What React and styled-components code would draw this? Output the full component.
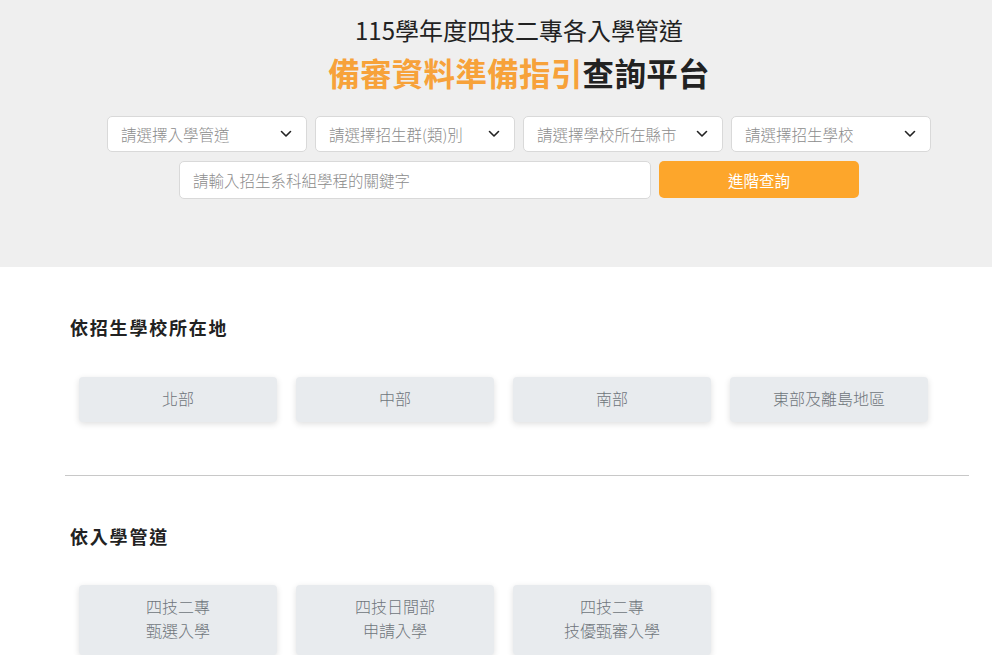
import React from "react";
import styled, { createGlobalStyle } from "styled-components";

const Global = createGlobalStyle`
  html, body { margin: 0; padding: 0; background: #fff; }
  body { font-family: "Noto Sans CJK TC", "Noto Sans", sans-serif; color: #212529; }
  * { box-sizing: border-box; }
`;

const Header = styled.header`
  background: #efefef;
  height: 267px;
  padding-top: 14px;
`;

const Container = styled.div`
  width: 900px;
  margin-left: 69px;
  display: flex;
  flex-direction: column;
  align-items: ${(p) => (p.$center ? "center" : "stretch")};
`;

const Title = styled.h1`
  margin: 0;
  font-size: 24px;
  line-height: 32px;
  font-weight: 400;
  color: #222;
  text-align: center;
`;

const Subtitle = styled.h2`
  margin: 4px 0 0;
  font-size: 31.5px;
  line-height: 44px;
  font-weight: 700;
  color: #222;
  text-align: center;
  letter-spacing: 0.3px;
`;

const Accent = styled.span`
  color: #f7a23a;
`;

const Row = styled.div`
  display: flex;
  gap: 8px;
  margin-top: ${(p) => p.$mt}px;
`;

const Select = styled.div`
  width: 200px;
  height: 36px;
  background: #fff;
  border: 1px solid #d9d9d9;
  border-radius: 5px;
  display: flex;
  align-items: center;
  justify-content: space-between;
  padding: 0 14px 0 13px;
  font-size: 15.5px;
  font-weight: 300;
  color: #8c8c8c;
`;

const Input = styled.div`
  width: 472px;
  height: 38px;
  background: #fff;
  border: 1px solid #d9d9d9;
  border-radius: 5px;
  display: flex;
  align-items: center;
  padding: 0 13px;
  font-size: 15.5px;
  font-weight: 300;
  color: #8c8c8c;
`;

const Button = styled.button`
  width: 200px;
  height: 37px;
  border: none;
  border-radius: 5px;
  background: #fda62b;
  color: #fff;
  font-family: inherit;
  font-size: 15.5px;
  font-weight: 400;
`;

const Section = styled.section`
  padding-top: ${(p) => p.$pt}px;
`;

const Heading = styled.h3`
  margin: 0;
  font-size: 18px;
  line-height: 28px;
  font-weight: 700;
  letter-spacing: 1.8px;
  color: #222;
  padding-left: 1px;
`;

const Grid = styled.div`
  display: grid;
  grid-template-columns: repeat(4, 198px);
  column-gap: 19px;
  padding-left: 10px;
  margin-top: ${(p) => p.$mt}px;
`;

const Card = styled.div`
  height: ${(p) => p.$h}px;
  background: #e8ebee;
  border-radius: 4px;
  box-shadow: 0 2px 6px rgba(0, 0, 0, 0.13);
  display: flex;
  flex-direction: column;
  align-items: center;
  justify-content: center;
  padding-bottom: 4px;
  font-size: 16px;
  font-weight: 300;
  line-height: 24px;
  color: #6f757b;
  text-align: center;
`;

const Divider = styled.hr`
  margin: 53px 0 0 -4px;
  width: 904px;
  border: none;
  border-top: 1px solid #c8c8c8;
`;

const Chevron = () => (
  <svg width="12" height="8" viewBox="0 0 12 8" fill="none">
    <path d="M1.5 1.5 L6 6 L10.5 1.5" stroke="#222" strokeWidth="1.6" strokeLinecap="round" strokeLinejoin="round" />
  </svg>
);

const selects = ["請選擇入學管道", "請選擇招生群(類)別", "請選擇學校所在縣市", "請選擇招生學校"];
const regions = ["北部", "中部", "南部", "東部及離島地區"];
const channels = [
  ["四技二專", "甄選入學"],
  ["四技日間部", "申請入學"],
  ["四技二專", "技優甄審入學"],
];

export default function App() {
  return (
    <>
      <Global />
      <Header>
        <Container $center>
          <Title>115學年度四技二專各入學管道</Title>
          <Subtitle>
            <Accent>備審資料準備指引</Accent>查詢平台
          </Subtitle>
          <Row $mt={22}>
            {selects.map((s) => (
              <Select key={s}>
                <span>{s}</span>
                <Chevron />
              </Select>
            ))}
          </Row>
          <Row $mt={9}>
            <Input>請輸入招生系科組學程的關鍵字</Input>
            <Button>進階查詢</Button>
          </Row>
        </Container>
      </Header>
      <Container>
        <Section $pt={46}>
          <Heading>依招生學校所在地</Heading>
          <Grid $mt={36}>
            {regions.map((r) => (
              <Card key={r} $h={45}>{r}</Card>
            ))}
          </Grid>
        </Section>
        <Divider />
        <Section $pt={46}>
          <Heading>依入學管道</Heading>
          <Grid $mt={35}>
            {channels.map((c) => (
              <Card key={c.join()} $h={70}>
                <span>{c[0]}</span>
                <span>{c[1]}</span>
              </Card>
            ))}
          </Grid>
        </Section>
      </Container>
    </>
  );
}
